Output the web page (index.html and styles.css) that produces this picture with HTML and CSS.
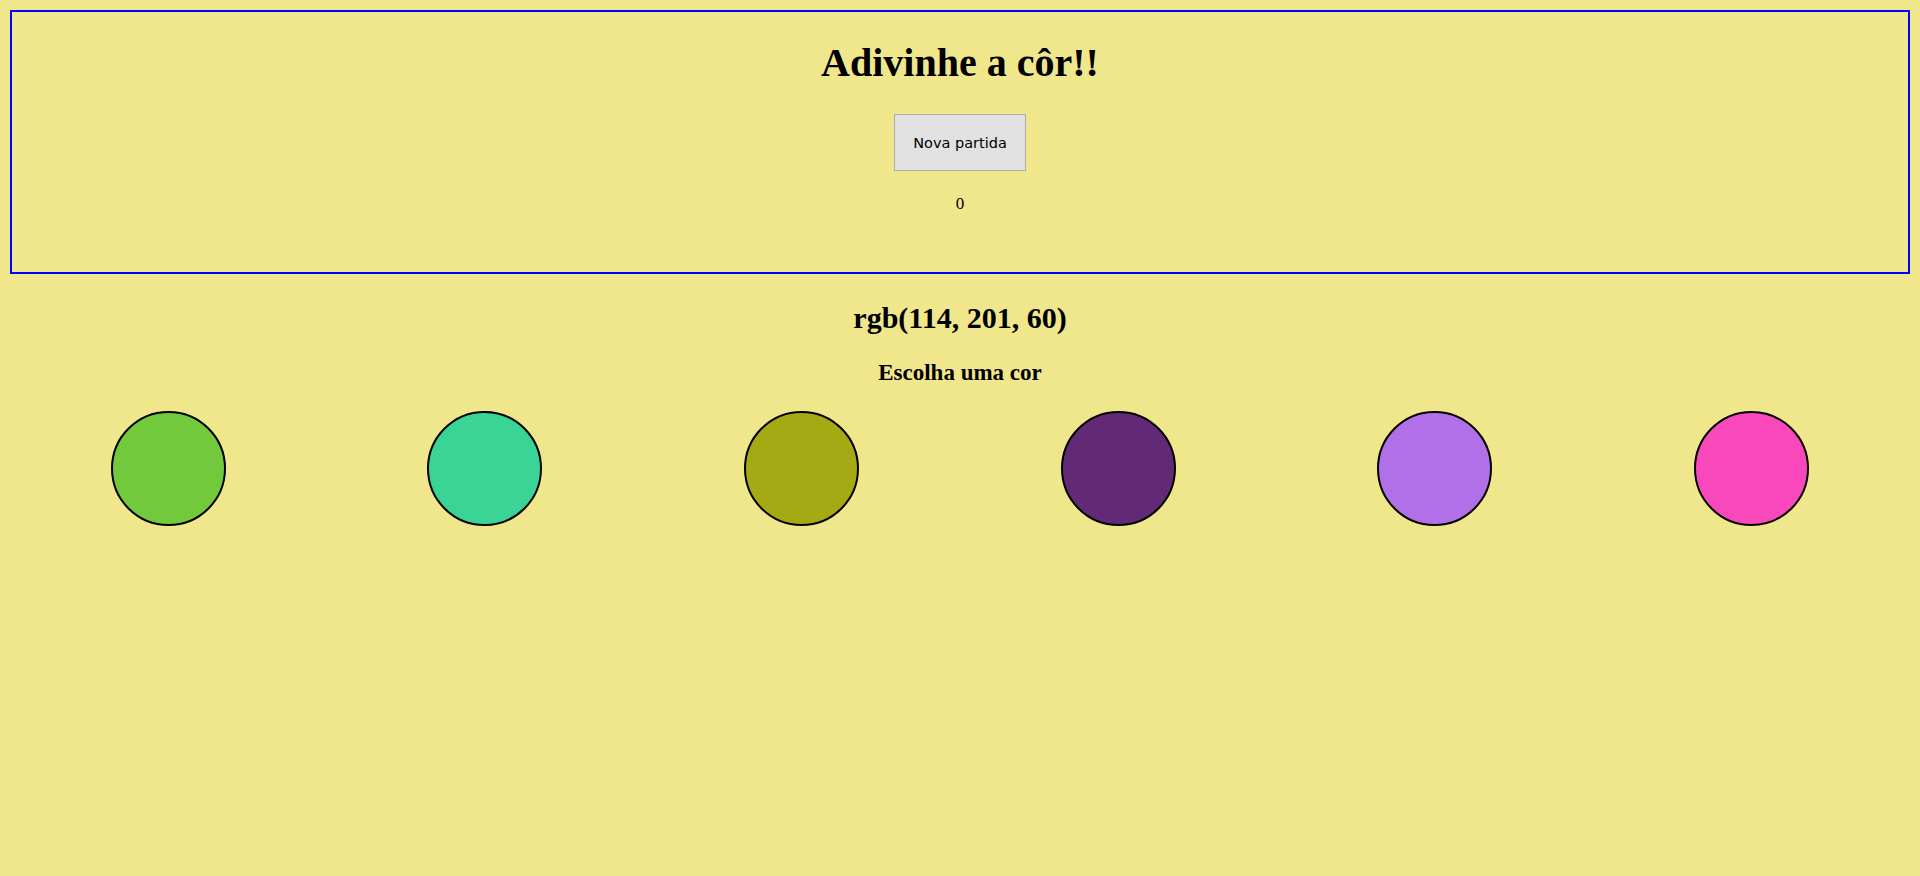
FILE: index.html
```html
<!DOCTYPE html>
<html lang="pt">
<head>
<meta charset="utf-8">
<title>Adivinhe a côr</title>
<link rel="stylesheet" href="styles.css">
</head>
<body>
  <header class="top">
    <h1 class="title">Adivinhe a côr!!</h1>
    <button class="new-game" type="button">Nova partida</button>
    <p class="score">0</p>
  </header>
  <main class="game">
    <h2 class="target">rgb(114, 201, 60)</h2>
    <h3 class="hint">Escolha uma cor</h3>
    <div class="balls">
      <div class="ball" style="background: rgb(114, 201, 60)"></div>
      <div class="ball" style="background: rgb(58, 212, 150)"></div>
      <div class="ball" style="background: rgb(164, 169, 20)"></div>
      <div class="ball" style="background: rgb(98, 42, 118)"></div>
      <div class="ball" style="background: rgb(177, 112, 232)"></div>
      <div class="ball" style="background: rgb(249, 72, 187)"></div>
    </div>
  </main>
</body>
</html>
```

FILE: styles.css
```css
html, body {
  background: #f0e68c;
}

body {
  margin: 10px;
  font-family: "Liberation Serif", "Times New Roman", serif;
  color: #000;
}

.top {
  border: 2px solid #0000ff;
  display: flex;
  flex-direction: column;
  align-items: center;
  text-align: center;
  height: 260px;
}

.title {
  font-size: 40px;
  font-weight: bold;
  line-height: 46px;
  margin: 28px 0 26px;
}

.new-game {
  margin-top: 2px;
  height: 57px;
  padding: 0 18px;
  background: #e1e1e1;
  border: 1px solid #adadad;
  border-radius: 0;
  font-family: "DejaVu Sans", Verdana, sans-serif;
  font-size: 14.5px;
  color: #000;
}

.score {
  font-size: 17px;
  line-height: 20px;
  margin: 23px 0 0;
}

.game {
  text-align: center;
}

.target {
  font-size: 30px;
  font-weight: bold;
  line-height: 34px;
  margin: 27px 0 0;
}

.hint {
  font-size: 23px;
  font-weight: bold;
  line-height: 26px;
  margin: 25px 0 0;
}

.balls {
  display: grid;
  grid-template-columns: repeat(6, 1fr);
  justify-items: center;
  margin-top: 25px;
}

.ball {
  width: 111px;
  height: 111px;
  border: 2px solid #000;
  border-radius: 50%;
}
```
